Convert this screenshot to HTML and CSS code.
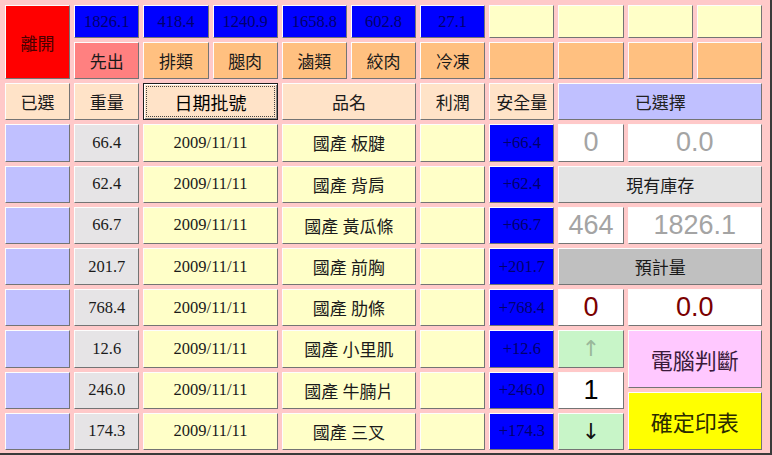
FILE: index.html
```html
<!DOCTYPE html>
<html lang="zh-Hant">
<head>
  <meta charset="UTF-8" />
  <title>出貨選擇</title>
  <link rel="stylesheet" href="styles.css">
</head>
<body>
  <div class="screen">
    <div class="board">
      <!-- 上方統計 -->
      <div class="cell exit">離開</div>
      <div class="cell blue">1826.1</div>
      <div class="cell blue">418.4</div>
      <div class="cell blue">1240.9</div>
      <div class="cell blue">1658.8</div>
      <div class="cell blue">602.8</div>
      <div class="cell blue">27.1</div>
      <div class="cell cream"></div>
      <div class="cell cream"></div>
      <div class="cell cream"></div>
      <div class="cell cream"></div>

      <div class="cell salmon">先出</div>
      <div class="cell peach">排類</div>
      <div class="cell peach">腿肉</div>
      <div class="cell peach">滷類</div>
      <div class="cell peach">絞肉</div>
      <div class="cell peach">冷凍</div>
      <div class="cell peach"></div>
      <div class="cell peach"></div>
      <div class="cell peach"></div>
      <div class="cell peach"></div>

      <!-- 表頭 -->
      <div class="cell head">已選</div>
      <div class="cell head">重量</div>
      <div class="cell head focus span2">日期批號</div>
      <div class="cell head span2">品名</div>
      <div class="cell head">利潤</div>
      <div class="cell head">安全量</div>
      <div class="cell lav span3">已選擇</div>

      <!-- 1 -->
      <div class="cell lav"></div>
      <div class="cell gray">66.4</div>
      <div class="cell yellow span2">2009/11/11</div>
      <div class="cell yellow span2 name">國產 板腱</div>
      <div class="cell yellow"></div>
      <div class="cell blue">+66.4</div>
      <div class="cell white big">0</div>
      <div class="cell white big span2">0.0</div>

      <!-- 2 -->
      <div class="cell lav"></div>
      <div class="cell gray">62.4</div>
      <div class="cell yellow span2">2009/11/11</div>
      <div class="cell yellow span2 name">國產 背肩</div>
      <div class="cell yellow"></div>
      <div class="cell blue">+62.4</div>
      <div class="cell stock span3">現有庫存</div>

      <!-- 3 -->
      <div class="cell lav"></div>
      <div class="cell gray">66.7</div>
      <div class="cell yellow span2">2009/11/11</div>
      <div class="cell yellow span2 name">國產 黃瓜條</div>
      <div class="cell yellow"></div>
      <div class="cell blue">+66.7</div>
      <div class="cell white big">464</div>
      <div class="cell white big span2">1826.1</div>

      <!-- 4 -->
      <div class="cell lav"></div>
      <div class="cell gray">201.7</div>
      <div class="cell yellow span2">2009/11/11</div>
      <div class="cell yellow span2 name">國產 前胸</div>
      <div class="cell yellow"></div>
      <div class="cell blue">+201.7</div>
      <div class="cell plan span3">預計量</div>

      <!-- 5 -->
      <div class="cell lav"></div>
      <div class="cell gray">768.4</div>
      <div class="cell yellow span2">2009/11/11</div>
      <div class="cell yellow span2 name">國產 肋條</div>
      <div class="cell yellow"></div>
      <div class="cell blue">+768.4</div>
      <div class="cell white big red">0</div>
      <div class="cell white big red span2">0.0</div>

      <!-- 6 -->
      <div class="cell lav"></div>
      <div class="cell gray">12.6</div>
      <div class="cell yellow span2">2009/11/11</div>
      <div class="cell yellow span2 name">國產 小里肌</div>
      <div class="cell yellow"></div>
      <div class="cell blue">+12.6</div>
      <div class="cell green up">↑</div>
      <div class="actions">
        <div class="cell pink">電腦判斷</div>
        <div class="cell print">確定印表</div>
      </div>

      <!-- 7 -->
      <div class="cell lav"></div>
      <div class="cell gray">246.0</div>
      <div class="cell yellow span2">2009/11/11</div>
      <div class="cell yellow span2 name">國產 牛腩片</div>
      <div class="cell yellow"></div>
      <div class="cell blue">+246.0</div>
      <div class="cell white big black">1</div>

      <!-- 8 -->
      <div class="cell lav"></div>
      <div class="cell gray">174.3</div>
      <div class="cell yellow span2">2009/11/11</div>
      <div class="cell yellow span2 name">國產 三叉</div>
      <div class="cell yellow"></div>
      <div class="cell blue">+174.3</div>
      <div class="cell green down">↓</div>
    </div>
  </div>
</body>
</html>
```

FILE: styles.css
```css
* {
  box-sizing: border-box;
}
body {
  margin: 0;
  background-color: #FFC9C9;
}
.screen {
  width: 772px;
  height: 455px;
  background-color: #FFC9C9;
  border-right: 2px solid #3a3a3a;
  border-bottom: 2px solid #3a3a3a;
  padding: 5px 8px 0 5px;
  font-family: "Liberation Serif", "Noto Sans CJK TC", serif;
  font-size: 16.5px;
  color: #1a1a1a;
}
.board {
  display: grid;
  grid-template-columns: repeat(11, 1fr);
  grid-template-rows: 33px repeat(10, 37.2px);
  gap: 4px;
}
.cell {
  display: flex;
  justify-content: center;
  align-items: center;
  border: 1px solid;
  border-color: #fdfdfd #747474 #747474 #fdfdfd;
  white-space: nowrap;
}
.span2 {
  grid-column: span 2;
}
.span3 {
  grid-column: span 3;
}
.exit {
  grid-row: span 2;
  background-color: #FF0000;
  color: #4a0000;
  font-size: 17px;
}
.blue {
  background-color: #0000FF;
  color: #00006e;
}
.cream {
  background-color: #FFFFC8;
}
.salmon {
  background-color: #FF8080;
  font-size: 17px;
}
.peach {
  background-color: #FFC080;
  font-size: 17px;
}
.head {
  background-color: #FFE3C8;
  font-size: 17px;
}
.head.focus {
  border: 1px solid #1e1e1e;
  box-shadow: inset 1px 1px 0 #fff, inset -1px -1px 0 #8a8a8a;
  outline: 1px dotted #444;
  outline-offset: -4px;
  font-size: 18px;
  color: #000;
}
.lav {
  background-color: #C0C0FF;
  font-size: 17px;
  color: #222;
}
.gray {
  background-color: #E6E4E6;
}
.yellow {
  background-color: #FFFFC8;
}
.name {
  font-size: 17px;
}
.white {
  background-color: #FFFFFF;
}
.big {
  font-family: "Liberation Sans", sans-serif;
  font-size: 27px;
  color: #a4a4a4;
}
.big.red {
  color: #7a0000;
}
.big.black {
  color: #000;
}
.stock {
  background-color: #E4E4E4;
  font-size: 17px;
}
.plan {
  background-color: #C0C0C0;
  font-size: 17px;
}
.green {
  background-color: #C8F5C8;
  font-family: "DejaVu Sans", sans-serif;
  font-size: 22px;
  transform-origin: center;
}
.up {
  color: #9ab89a;
}
.down {
  color: #111;
}
.actions {
  grid-column: span 2;
  grid-row: span 3;
  display: grid;
  grid-template-rows: 1fr 1fr;
  gap: 4px;
}
.pink {
  background-color: #FFC8FF;
  color: #3a1a3a;
  font-size: 22px;
}
.print {
  background-color: #FFFF00;
  color: #2a2a00;
  font-size: 22px;
}
```
